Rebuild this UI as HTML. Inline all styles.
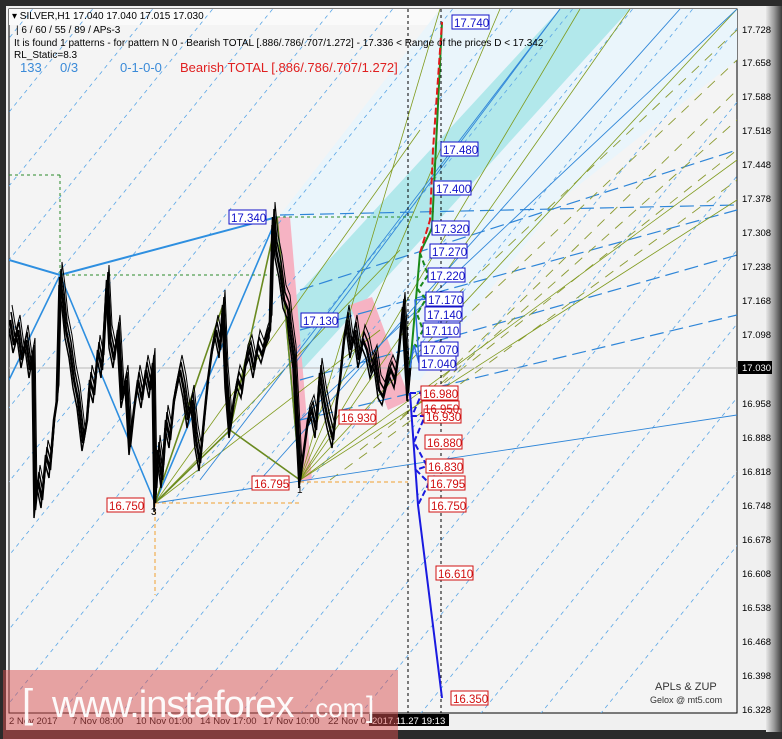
<!DOCTYPE html>
<html><head><meta charset="utf-8"><style>
html,body{margin:0;padding:0;background:#2a2a2a;}
svg{display:block}
text{font-family:"Liberation Sans",sans-serif}
</style></head><body>
<svg width="782" height="739" viewBox="0 0 782 739" xmlns="http://www.w3.org/2000/svg">
<defs>
<linearGradient id="rg" x1="0" x2="1"><stop offset="0" stop-color="#e8e8e8"/><stop offset="0.5" stop-color="#9a9a9a"/><stop offset="1" stop-color="#3a3a3a"/></linearGradient>
<clipPath id="pc"><rect x="9" y="9" width="728" height="704"/></clipPath>
<polyline id="pr" fill="none" points="10,320 14,345 18,330 22,360 26,340 30,370 33,353 35,510 38,480 42,500 46,455 50,470 54,420 57,400 60,277 63,300 66,330 70,350 74,380 78,400 83,443 87,420 90,380 94,395 98,350 102,370 107,280 110,340 114,360 118,330 122,400 126,380 130,447 134,410 138,380 142,400 146,370 150,390 153,363 155,503 158,450 162,480 166,420 170,440 174,400 178,380 180,370 184,390 188,420 192,400 196,440 200,463 204,420 208,380 212,350 216,330 220,350 223,305 226,380 230,430 234,400 238,380 242,390 246,360 250,350 254,370 258,345 262,355 266,340 270,330 273,217 276,250 280,270 284,300 288,310 290,330 294,360 297,420 300,480 304,450 308,420 312,410 316,430 320,373 324,400 328,420 333,440 337,400 340,380 344,340 347,320 351,350 355,330 359,360 363,340 367,350 371,370 375,360 379,390 383,397 387,380 391,370 395,380 399,350 403,307 406,360 408,393 410,368"/>
</defs>
<rect width="782" height="739" fill="#2b2b2b"/>
<rect x="6" y="6" width="764" height="724" fill="#f0f0f0"/>
<rect x="766" y="6" width="16" height="726" fill="url(#rg)"/>
<rect x="9" y="9" width="728" height="704" fill="#f4f4f4" stroke="#000" stroke-width="1"/>
<g clip-path="url(#pc)">
<rect x="9" y="9" width="728" height="16" fill="#fafafa"/>
<polygon points="280,215 440,9 737,9 737,60 560,200 420,380 300,375" fill="#eaf5fb"/>
<polygon points="290,380 292,300 560,9 630,9 430,230 300,372" fill="#9fe3e6" opacity="0.75"/>
<polygon points="277,217 290,217 312,480 300,482" fill="#f6b3c3"/>
<polygon points="350,305 372,297 410,400 388,410" fill="#f6b3c3"/>
<g stroke="#5aa6e6" stroke-width="0.8" stroke-dasharray="4,4" fill="none">
<line x1="-620" y1="739" x2="-20" y2="0"/><line x1="-560" y1="739" x2="40" y2="0"/><line x1="-500" y1="739" x2="100" y2="0"/>
<line x1="-440" y1="739" x2="160" y2="0"/><line x1="-380" y1="739" x2="220" y2="0"/><line x1="-320" y1="739" x2="280" y2="0"/>
<line x1="-260" y1="739" x2="340" y2="0"/><line x1="-200" y1="739" x2="400" y2="0"/><line x1="-140" y1="739" x2="460" y2="0"/>
<line x1="-80" y1="739" x2="520" y2="0"/><line x1="-20" y1="739" x2="580" y2="0"/><line x1="40" y1="739" x2="640" y2="0"/>
<line x1="100" y1="739" x2="700" y2="0"/><line x1="160" y1="739" x2="760" y2="0"/><line x1="220" y1="739" x2="820" y2="0"/>
<line x1="280" y1="739" x2="880" y2="0"/><line x1="340" y1="739" x2="940" y2="0"/><line x1="400" y1="739" x2="1000" y2="0"/>
<line x1="460" y1="739" x2="1060" y2="0"/><line x1="520" y1="739" x2="1120" y2="0"/><line x1="580" y1="739" x2="1180" y2="0"/>
</g>
<g stroke="#2f86d8" stroke-width="1.2" stroke-dasharray="14,6" fill="none">
<line x1="300" y1="380" x2="737" y2="255"/><line x1="300" y1="330" x2="737" y2="210"/><line x1="300" y1="290" x2="737" y2="150"/>
<line x1="300" y1="420" x2="737" y2="315"/><line x1="280" y1="215" x2="737" y2="205"/>
</g>
<g stroke="#8a9a30" stroke-width="0.9" stroke-dasharray="10,8" fill="none">
<line x1="330" y1="480" x2="737" y2="180"/><line x1="360" y1="450" x2="737" y2="150"/><line x1="400" y1="420" x2="737" y2="120"/>
<line x1="430" y1="390" x2="737" y2="90"/><line x1="420" y1="360" x2="737" y2="60"/><line x1="430" y1="320" x2="737" y2="30"/>
</g>
<g stroke="#7f9a1c" stroke-width="0.8" fill="none">
<line x1="300" y1="480" x2="440" y2="9"/><line x1="300" y1="480" x2="500" y2="9"/><line x1="300" y1="480" x2="580" y2="9"/>
<line x1="300" y1="480" x2="630" y2="9"/><line x1="300" y1="480" x2="737" y2="160"/><line x1="300" y1="480" x2="737" y2="200"/>
<line x1="155" y1="503" x2="420" y2="130"/><line x1="155" y1="503" x2="400" y2="250"/><line x1="155" y1="503" x2="380" y2="330"/>
<line x1="300" y1="480" x2="737" y2="9"/>
</g>
<g stroke="#2f86d8" stroke-width="0.9" fill="none">
<line x1="155" y1="503" x2="737" y2="415"/><line x1="200" y1="480" x2="560" y2="9"/><line x1="260" y1="480" x2="680" y2="9"/>
<line x1="300" y1="420" x2="737" y2="9"/><line x1="290" y1="370" x2="560" y2="9"/>
</g>
<line x1="9" y1="368" x2="737" y2="368" stroke="#b8b8b8"/>
<g stroke="#000" stroke-width="1" stroke-dasharray="3,3"><line x1="408" y1="9" x2="408" y2="713"/><line x1="441" y1="9" x2="441" y2="713"/></g>
<polyline fill="none" stroke="#2e8fe0" stroke-width="2" points="9,260 60,275 277,217"/>
<polyline fill="none" stroke="#2e8fe0" stroke-width="1.6" points="9,380 60,275 155,503 277,217 300,480"/>
<polyline fill="none" stroke="#6a8a20" stroke-width="1.6" points="155,503 223,305 230,430 277,217 300,480 230,430 155,503"/>
<line x1="155" y1="503" x2="300" y2="503" stroke="#f0a030" stroke-dasharray="4,3"/>
<line x1="300" y1="482" x2="408" y2="482" stroke="#f0a030" stroke-dasharray="4,3"/>
<line x1="155" y1="503" x2="155" y2="595" stroke="#f0a030" stroke-dasharray="4,3"/>
<line x1="60" y1="175" x2="60" y2="275" stroke="#2a8a2a" stroke-dasharray="3,3"/>
<line x1="9" y1="175" x2="60" y2="175" stroke="#2a8a2a" stroke-dasharray="3,3"/>
<line x1="60" y1="275" x2="277" y2="275" stroke="#2a8a2a" stroke-dasharray="3,3"/>
<line x1="277" y1="217" x2="420" y2="217" stroke="#2a8a2a" stroke-dasharray="3,3"/>
<!-- price -->
<use href="#pr" stroke="#000" stroke-width="2.5"/>
<use href="#pr" stroke="#000" stroke-width="1.5" transform="translate(1,-8)"/>
<use href="#pr" stroke="#000" stroke-width="1.5" transform="translate(-1,8)"/>
<use href="#pr" stroke="#000" stroke-width="1" transform="translate(2,-15)"/>
<polyline fill="none" stroke="#1a1ae0" stroke-width="2" points="410,393 418,505 442,698"/>
<polyline fill="none" stroke="#1a1ae0" stroke-width="2" stroke-dasharray="6,3" points="410,393 422,393 412,416 425,416 414,442 427,466 416,470 429,483 418,505"/>
<polyline fill="none" stroke="#1a8a1a" stroke-width="2" points="410,368 420,253 432,228 442,22"/>
<polyline fill="none" stroke="#e01a1a" stroke-width="2" stroke-dasharray="7,3" points="420,253 430,220 433,150 442,22"/>
<polyline fill="none" stroke="#1a8a1a" stroke-width="2" stroke-dasharray="5,3" points="420,253 428,275 418,290 426,299 417,314 423,330 415,345 421,349"/>
<polyline fill="none" stroke="#3070e0" stroke-width="1.5" points="410,368 414,345 419,363 415,300 426,299"/>
</g>
<g font-size="11.5">
<g fill="#fff" stroke="#1212c8" stroke-width="1">
<rect x="452" y="15" width="37" height="14"/><rect x="441" y="142" width="37" height="14"/><rect x="434" y="181" width="37" height="14"/>
<rect x="432" y="221" width="37" height="14"/><rect x="430" y="244" width="37" height="14"/><rect x="428" y="268" width="37" height="14"/>
<rect x="426" y="292" width="37" height="14"/><rect x="425" y="307" width="37" height="14"/><rect x="423" y="323" width="37" height="14"/>
<rect x="421" y="342" width="37" height="14"/><rect x="419" y="356" width="37" height="14"/><rect x="229" y="210" width="37" height="14"/><rect x="301" y="313" width="37" height="14"/>
</g>
<g fill="#1212c8">
<text x="454" y="27">17.740</text><text x="443" y="154">17.480</text><text x="436" y="193">17.400</text><text x="434" y="233">17.320</text>
<text x="432" y="256">17.270</text><text x="430" y="280">17.220</text><text x="428" y="304">17.170</text><text x="427" y="319">17.140</text>
<text x="425" y="335">17.110</text><text x="423" y="354">17.070</text><text x="421" y="368">17.040</text><text x="231" y="222">17.340</text><text x="303" y="325">17.130</text>
</g>
<g fill="#fff" stroke="#d01010" stroke-width="1">
<rect x="421" y="386" width="37" height="14"/><rect x="422" y="401" width="37" height="14"/><rect x="424" y="409" width="37" height="14"/>
<rect x="425" y="435" width="37" height="14"/><rect x="426" y="459" width="37" height="14"/><rect x="428" y="476" width="37" height="14"/>
<rect x="429" y="498" width="37" height="14"/><rect x="436" y="566" width="37" height="14"/><rect x="451" y="691" width="37" height="14"/>
<rect x="107" y="498" width="37" height="14"/><rect x="252" y="476" width="37" height="14"/><rect x="339" y="410" width="37" height="14"/>
</g>
<g fill="#d01010">
<text x="423" y="398">16.980</text><text x="424" y="413">16.950</text><text x="426" y="421">16.930</text><text x="427" y="447">16.880</text>
<text x="428" y="471">16.830</text><text x="430" y="488">16.795</text><text x="431" y="510">16.750</text><text x="438" y="578">16.610</text>
<text x="453" y="703">16.350</text><text x="109" y="510">16.750</text><text x="254" y="488">16.795</text><text x="341" y="422">16.930</text>
</g>
</g>
<text x="151" y="515" font-size="10">3</text><text x="297" y="493" font-size="10">1</text>
<g font-size="10" fill="#000">
<text x="12" y="19">▾ SILVER,H1  17.040 17.040 17.015 17.030</text>
<text x="16" y="33">| 6 / 60 / 55 / 89 / APs-3</text>
<text x="14" y="46">It is found 1 patterns  -  for pattern N 0 - Bearish TOTAL [.886/.786/.707/1.272] - 17.336 &lt; Range of the prices D &lt; 17.342</text>
<text x="14" y="58">RL_Static=8.3</text>
</g>
<g font-size="13"><text x="20" y="72" fill="#3a8ad8">133</text><text x="60" y="72" fill="#3a8ad8">0/3</text><text x="120" y="72" fill="#3a8ad8">0-1-0-0</text>
<text x="180" y="72" fill="#e02020">Bearish TOTAL [.886/.786/.707/1.272]</text></g>
<g font-size="9.5" fill="#000">
<text x="742" y="33">17.728</text><text x="742" y="66">17.658</text><text x="742" y="100">17.588</text><text x="742" y="134">17.518</text>
<text x="742" y="168">17.448</text><text x="742" y="202">17.378</text><text x="742" y="236">17.308</text><text x="742" y="270">17.238</text>
<text x="742" y="304">17.168</text><text x="742" y="338">17.098</text><text x="742" y="407">16.958</text><text x="742" y="441">16.888</text>
<text x="742" y="475">16.818</text><text x="742" y="509">16.748</text><text x="742" y="543">16.678</text><text x="742" y="577">16.608</text>
<text x="742" y="611">16.538</text><text x="742" y="645">16.468</text><text x="742" y="679">16.398</text><text x="742" y="713">16.328</text>
</g>
<rect x="738" y="361" width="34" height="13" fill="#000"/><text x="742" y="371" font-size="9.5" fill="#fff">17.030</text>
<text x="655" y="690" font-size="11" fill="#333" font-family="Liberation Serif,serif">APLs &amp; ZUP</text>
<text x="650" y="703" font-size="9" fill="#333" font-family="Liberation Serif,serif">Gelox @ mt5.com</text>
<g font-size="9.5" fill="#000"><text x="9" y="724">2 Nov 2017</text><text x="72" y="724">7 Nov 08:00</text><text x="136" y="724">10 Nov 01:00</text>
<text x="200" y="724">14 Nov 17:00</text><text x="263" y="724">17 Nov 10:00</text><text x="328" y="724">22 Nov 0</text></g>
<rect x="369" y="714" width="80" height="12" fill="#000"/><text x="372" y="724" font-size="9.5" fill="#fff">2017.11.27 19:13</text>
<rect x="3" y="670" width="395" height="69" fill="#d85050" opacity="0.5"/>
<text x="22" y="717" font-size="40" fill="#fff" opacity="0.95">[</text>
<text x="52" y="717" font-size="38" fill="#fff" opacity="0.95" letter-spacing="-1">www.instaforex</text>
<text x="308" y="717" font-size="26" fill="#fff" opacity="0.95">.com</text>
<text x="366" y="717" font-size="30" fill="#fff" opacity="0.95">]</text>
</svg>
</body></html>
